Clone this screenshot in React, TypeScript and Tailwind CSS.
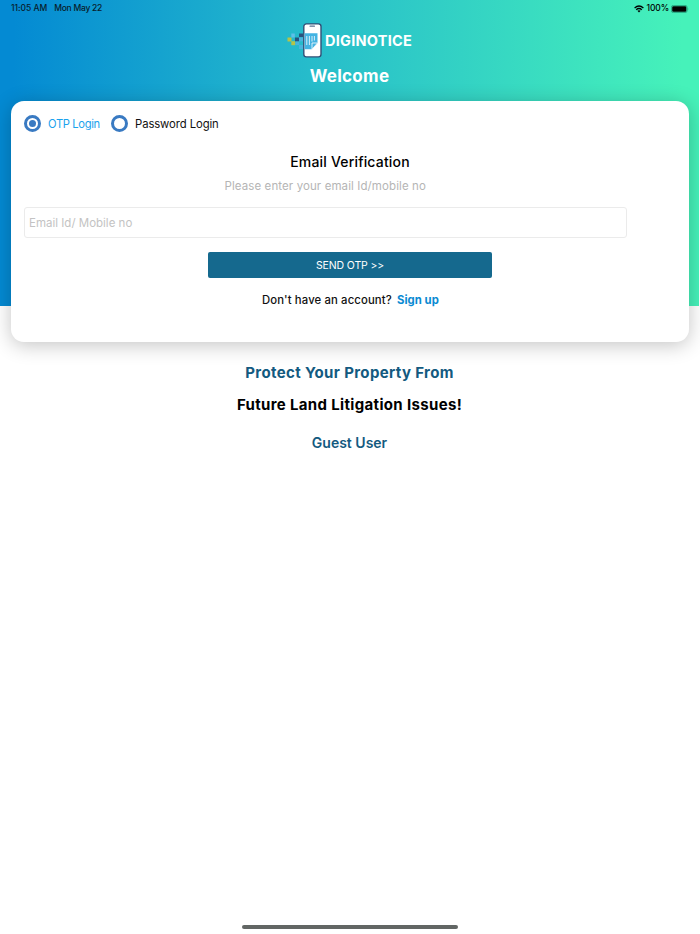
import React from "react";

function Logo() {
  return (
    <svg width="35" height="35" viewBox="0 0 35 35" className="shrink-0">
      <rect x="0.5" y="14.5" width="4" height="4" fill="#b5c447" />
      <rect x="4.3" y="10.5" width="3.5" height="4" fill="#5dbfe8" />
      <rect x="4.3" y="18.2" width="4" height="4" fill="#b5c447" />
      <rect x="8" y="14.5" width="4" height="4" fill="#28527e" />
      <rect x="8.3" y="18.5" width="4" height="3.6" fill="#49b4dd" />
      <rect x="12" y="10.5" width="4" height="3.6" fill="#28527e" />
      <rect x="12" y="14.5" width="4" height="3.8" fill="#49b4dd" />
      <rect x="12" y="22" width="4" height="4" fill="#49b4dd" />
      <rect x="16.8" y="0.9" width="17.2" height="33" rx="2.6" fill="#fff" stroke="#315077" strokeWidth="1.4" />
      <rect x="22.5" y="2.6" width="5.5" height="1.2" rx="0.6" fill="#59708f" />
      <path d="M17.6 10.3H30.5V20L25 26.3H17.6Z" fill="#43b3e2" />
      <path d="M25 26.3V20H30.5Z" fill="#43b3e2" stroke="#fff" strokeWidth="0.8" />
      <path d="M19.8 13V22M22.4 13V22M25 13V18.5M27.4 13V17.5" stroke="#fff" strokeWidth="0.8" />
    </svg>
  );
}

function StatusBar() {
  return (
    <div className="flex h-[17px] items-center justify-between pl-[11px] pr-[10px] text-[8.5px] leading-[17px] font-medium text-[#08202c]">
      <div className="flex gap-[7px]">
        <span className="tracking-[-0.03px]">11:05 AM</span>
        <span className="tracking-[-0.25px]">Mon May 22</span>
      </div>
      <div className="flex items-center text-black">
        <svg width="10" height="8" viewBox="0 0 10 8" fill="none" stroke="currentColor">
          <path d="M0.6 2.9Q5 -1 9.4 2.9" strokeWidth="1.3" />
          <path d="M2.2 4.7Q5 2.3 7.8 4.7" strokeWidth="1.3" />
          <path d="M3.4 5.8Q5 4.5 6.6 5.8L5 7.6Z" fill="currentColor" stroke="none" />
        </svg>
        <span className="ml-[2px] tracking-[-0.1px]">100%</span>
        <svg className="ml-[2px]" width="18" height="8" viewBox="0 0 18 8">
          <rect x="0.4" y="0.4" width="15.7" height="7.2" rx="2" fill="none" stroke="#219575" strokeWidth="0.8" />
          <rect x="1.2" y="1.2" width="14.1" height="5.6" rx="1.3" fill="#000" />
          <path d="M16.8 2.8Q18 4 16.8 5.2Z" fill="#219575" />
        </svg>
      </div>
    </div>
  );
}

function Radio({ checked }: { checked?: boolean }) {
  return (
    <span className="flex size-[17px] shrink-0 items-center justify-center rounded-full border-[3px] border-[#397ac2]">
      {checked && <span className="size-[7px] rounded-full bg-[#397ac2]" />}
    </span>
  );
}

export default function App() {
  return (
    <div className="flex h-[934px] w-[700px] flex-col overflow-hidden bg-white font-['Inter',sans-serif]">
      <div className="h-[306px] w-[699px] shrink-0 bg-[linear-gradient(91deg,#048ad3_2%,#26bccb_44%,#46f2ba_97%)]">
        <StatusBar />
        <div className="mt-[6px] flex h-[35px] items-center pl-[287px]">
          <Logo />
          <span className="ml-[3px] text-[14.5px] leading-[20px] font-bold tracking-[0.25px] whitespace-nowrap text-white">DIGINOTICE</span>
        </div>
        <h1 className="mt-[6px] text-center text-[17px] leading-[24px] font-bold tracking-[0.3px] text-white">Welcome</h1>

        <main className="mt-[13px] ml-[11px] flex h-[240.5px] w-[678px] flex-col rounded-[13px] bg-white shadow-[0_3px_20px_rgba(0,0,0,0.24)]">
          <div className="mt-[14px] ml-[13px] flex h-[17px] items-center text-[11.5px] leading-[17px] whitespace-nowrap">
            <Radio checked />
            <span className="ml-[7px] w-[63px] pt-[2px] text-[11.2px] tracking-[-0.34px] text-[#1aa2ed]">OTP Login</span>
            <Radio />
            <span className="ml-[7px] pt-[2px] text-[11.3px] tracking-[-0.09px] text-[#111]">Password Login</span>
          </div>
          <h2 className="mt-[19px] text-center text-[14px] leading-[22px] font-medium tracking-[0.18px] text-black">Email Verification</h2>
          <p className="mt-[4px] ml-[213.5px] text-[11.5px] leading-[18px] tracking-[0.1px] whitespace-nowrap text-[#b5b5b5]">Please enter your email Id/mobile no</p>
          <input
            className="mt-[12px] ml-[13px] h-[31px] w-[602.5px] rounded-[3px] border border-[#ebebeb] px-[4px] text-[11.5px] placeholder:text-[#c3c3c3]"
            placeholder="Email Id/ Mobile no"
          />
          <button className="mt-[14px] ml-[197px] h-[26px] w-[284px] rounded-[2px] bg-[#15698e] pt-px text-[10.5px] leading-[26px] tracking-[-0.12px] text-white">SEND OTP &gt;&gt;</button>
          <div className="mt-[13px] ml-[251px] flex text-[11.3px] leading-[18px] font-medium whitespace-nowrap">
            <span className="w-[135px] tracking-[0.13px] text-[#111]">Don't have an account?</span>
            <a className="font-bold tracking-[0.05px] text-[#0a8ad2]">Sign up</a>
          </div>
        </main>
      </div>

      <section className="mt-[55px] w-[699px] text-center">
        <h3 className="text-[15px] leading-[24px] font-bold tracking-[0.35px] text-[#135a80]">Protect Your Property From</h3>
        <h3 className="mt-[8px] text-[15px] leading-[24px] font-bold tracking-[0.34px] text-black">Future Land Litigation Issues!</h3>
        <p className="mt-[14px] text-[14px] leading-[24px] font-semibold text-[#135a80]">Guest User</p>
      </section>
      <div className="mt-auto mb-[5.5px] ml-[242px] h-[3.5px] w-[216px] rounded-full bg-[#626664]" />
    </div>
  );
}
